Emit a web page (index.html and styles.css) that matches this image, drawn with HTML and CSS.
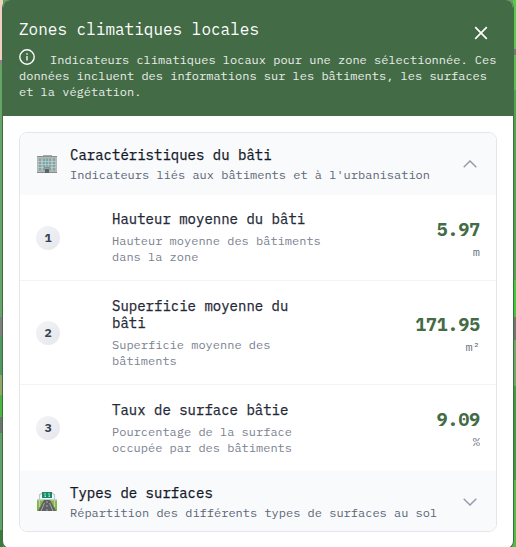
FILE: index.html
```html
<!DOCTYPE html>
<html lang="fr">
<head>
<meta charset="utf-8">
<title>Zones climatiques locales</title>
<link rel="stylesheet" href="styles.css">
</head>
<body>
<main class="panel">
  <header class="panel-header">
    <div class="title-row">
      <h1>Zones climatiques locales</h1>
      <svg class="close" viewBox="0 0 14 14" width="14" height="14"><path d="M1.2 1.2l11.6 11.6M12.8 1.2L1.2 12.8" fill="none" stroke="#fff" stroke-width="1.7"/></svg>
    </div>
    <p class="intro"><svg class="info" viewBox="0 0 16 16" width="16" height="16"><circle cx="8" cy="8" r="7.2" fill="none" stroke="#fff" stroke-width="1.4"/><path d="M8 7v4.400M8 4.300v1.500" stroke="#fff" stroke-width="1.3"/></svg>Indicateurs climatiques locaux pour une zone sélectionnée. Ces données incluent des informations sur les bâtiments, les surfaces et la végétation.</p>
  </header>
  <section class="content">
    <div class="card">
      <div class="group group-open">
        <svg class="emoji" viewBox="0 0 20 20" width="20" height="20">
          <path d="M6 1h9v2H6z" fill="#a9a9a9"/><path d="M0 2h20v17H0z" fill="#b9b5b1"/><path d="M0 2h20v1H0z" fill="#8e9090"/>
          <path d="M2 4.500h2v12H2zM6 4.500h2v12H6zM9 4.500h2v8H9zM12 4.500h2v12h-2zM16 4.500h2v12h-2z" fill="#69aeb4"/>
          <path d="M1 7.500h18M1 10.500h18M1 13.500h18" stroke="#d0ccc8" stroke-width=".7"/>
          <path d="M7 13h6v1.500H7zM0 18h20v1H0z" fill="#8c8c8c"/><path d="M8 15h4v4H8z" fill="#566568"/>
        </svg>
        <div class="group-text"><h2>Caractéristiques du bâti</h2><p>Indicateurs liés aux bâtiments et à l'urbanisation</p></div>
        <svg class="chevron" viewBox="0 0 14 8" width="14" height="8"><path d="M.7 7.300L7 1l6.300 6.300" fill="none" stroke="#959dac" stroke-width="1.500"/></svg>
      </div>
      <div class="row">
        <span class="badge">1</span>
        <div class="label"><h3>Hauteur moyenne du bâti</h3><p>Hauteur moyenne des bâtiments dans la zone</p></div>
        <div class="measure"><strong>5.97</strong><span>m</span></div>
      </div>
      <div class="row row-tall">
        <span class="badge">2</span>
        <div class="label"><h3>Superficie moyenne du bâti</h3><p>Superficie moyenne des bâtiments</p></div>
        <div class="measure"><strong>171.95</strong><span>m²</span></div>
      </div>
      <div class="row row-last">
        <span class="badge">3</span>
        <div class="label"><h3>Taux de surface bâtie</h3><p>Pourcentage de la surface occupée par des bâtiments</p></div>
        <div class="measure"><strong>9.09</strong><span>%</span></div>
      </div>
      <div class="group group-closed">
        <svg class="emoji" viewBox="0 0 20 20" width="20" height="20">
          <path d="M0 8h20v11H0z" fill="#82b83c"/><path d="M0 7h20v1.500H0z" fill="#b9d5d2"/>
          <path d="M7 8h6l6 11H1z" fill="#5e6062"/>
          <path d="M10 9v2M10 13v2M10 17v2M7.500 11L4 19M12.500 11L16 19" stroke="#d8d9d5" stroke-width=".6"/>
          <path d="M2.500 2v13M17.500 2v13M2.500 3L5 1M17.500 3L15 1" stroke="#c3c7c8" stroke-width="1.200" fill="none"/>
          <path d="M5 0h10v6H5z" fill="#168c65"/><path d="M7 1.500h2v1H7zM11 1.500h2v1h-2zM7.500 3.500H9V5H7.500zM11.500 3.500H13V5h-1.500z" fill="#b5ddce"/>
        </svg>
        <div class="group-text"><h2>Types de surfaces</h2><p>Répartition des différents types de surfaces au sol</p></div>
        <svg class="chevron" viewBox="0 0 14 8" width="14" height="8"><path d="M.7.700L7 7l6.300-6.300" fill="none" stroke="#959dac" stroke-width="1.500"/></svg>
      </div>
    </div>
  </section>
</main>
</body>
</html>
```
FILE: styles.css
```css
* { box-sizing: border-box; }
body {
  margin: 0;
  height: 547px;
  overflow: hidden;
  padding: 0 2px;
  font-family: "IBM Plex Mono", "Liberation Mono", monospace;
  background:
    linear-gradient(#efd2c1 0 60px, #8b858b 60px 65px, #65a568 65px 317px, #817d83 317px 336px, #4f9861 336px 375px, #8fa868 375px 395px, #49b63d 395px 417px, #6b756b 417px 433px, #5da266 433px 530px, #397c39 530px) left / 3px 100% no-repeat,
    linear-gradient(#59c94d 0 49px, #777 49px 55px, #59bd50 55px 90px, #51a34d 90px 280px, #3fcb35 280px 317px, #777174 317px 340px, #6ca766 340px 386px, #409c3e 386px 480px, #4dbd45 480px) right / 3px 100% no-repeat,
    #58a853;
}
h1, h2, h3, p { margin: 0; }
svg { display: block; flex: none; }
.panel {
  height: 549px;
  border: 1px solid #436b46;
  border-top: 0;
  border-radius: 8px;
  overflow: hidden;
  background: #fff;
}
.panel-header {
  height: 116px;
  margin: 0 -1px;
  padding: 19px 17px 0;
  background: #436b46;
  color: #fff;
}
.title-row { display: flex; justify-content: space-between; height: 29px; }
h1 { font-size: 16px; line-height: 21px; font-weight: 400; }
.close { margin: 7px 9px 0 0; }
.intro { font-size: 12px; line-height: 16px; color: #e8eee8; padding-top: 4px; margin-right: -4px; }
.info { display: inline-block; vertical-align: top; margin: -3px 15px 0 0; }
.content { padding: 16px; }
.card { height: 400px; border: 1px solid #e4e6ea; border-radius: 8px; overflow: hidden; }
.group { display: flex; align-items: center; padding: 0 19px 0 17px; background: #f9fafc; }
.group-open { height: 62px; }
.group-closed { height: 62px; }
.emoji { margin-right: 13px; }
.group-text { flex: 1; padding-top: 2px; }
h2, h3 { font-size: 14px; font-weight: 400; -webkit-text-stroke: .25px currentColor; }
h2 { line-height: 20px; color: #111827; }
.group-text p { font-size: 12px; line-height: 20px; color: #5b6676; }
.row {
  display: grid;
  grid-template-columns: 76px 212px 1fr;
  align-items: center;
  height: 86px;
  padding: 0 16px;
  border-bottom: 1px solid #f3f4f6;
}
.row-tall { height: 104px; }
.row-last { border-bottom: 0; }
.badge {
  width: 24px;
  height: 24px;
  border-radius: 50%;
  background: linear-gradient(135deg, #f3f4f6, #e5e7eb);
  color: #374151;
  font-size: 12px;
  line-height: 24px;
  font-weight: 700;
  text-align: center;
}
h3 { line-height: 17px; color: #1f2937; margin-bottom: 5px; }
.label { padding-top: 1px; }
.label p { font-size: 12px; line-height: 16px; color: #7b8290; }
.measure { display: flex; flex-direction: column; align-items: flex-end; gap: 3px; padding-top: 2px; }
.measure strong { font-size: 18px; line-height: 23px; font-weight: 700; color: #436b46; }
.measure span { font-size: 12px; line-height: 16px; color: #6b7280; }
```
